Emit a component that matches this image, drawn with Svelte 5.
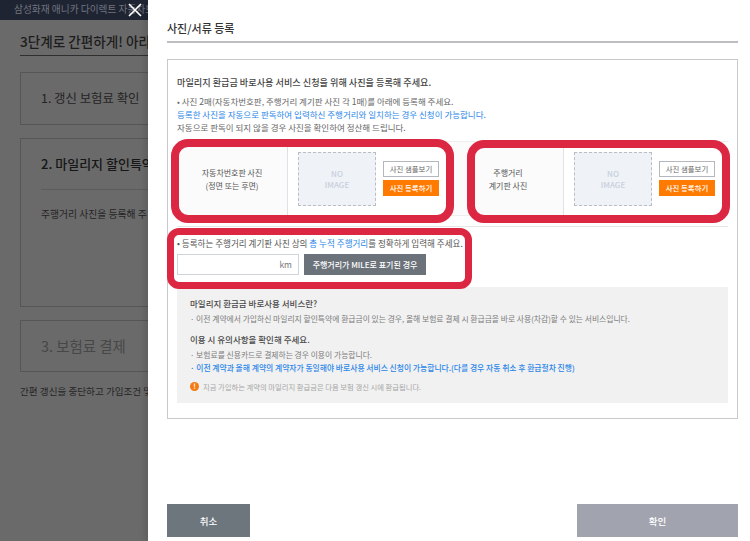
<script>
  const steps = [
    { title: "1. 갱신 보험료 확인", cls: "one" },
    { title: "2. 마일리지 할인특약", cls: "two" },
    { title: "3. 보험료 결제", cls: "three" }
  ];
  const photos = [
    { lines: ["자동차번호판 사진", "(정면 또는 후면)"], cls: "car" },
    { lines: ["주행거리", "계기판 사진"], cls: "meter" }
  ];
</script>

<div class="page">
  <div class="behind">
    <div class="topbar">삼성화재 애니카 다이렉트 자동차보</div>
    <div class="behind-body">
      <h2>3단계로 간편하게! 아라</h2>
      {#each steps as step}
        <section class="step {step.cls}">
          <h3>{step.title}</h3>
          {#if step.cls === "two"}
            <div class="step-line"></div>
            <p>주행거리 사진을 등록해 주</p>
          {/if}
        </section>
      {/each}
      <p class="behind-foot">간편 갱신을 중단하고 가입조건 및</p>
    </div>
  </div>

  <svg class="close" width="16" height="16" viewBox="0 0 16 16">
    <path d="M2 2 L14 14 M14 2 L2 14" stroke="#fff" stroke-width="1.6" fill="none" />
  </svg>

  <aside class="drawer">
    <h1>사진/서류 등록</h1>

    <div class="panel">
      <h4>마일리지 환급금 바로사용 서비스 신청을 위해 사진을 등록해 주세요.</h4>
      <div class="notes">
        <div>• 사진 2매(자동차번호판, 주행거리 계기판 사진 각 1매)를 아래에 등록해 주세요.</div>
        <div class="blue">등록한 사진을 자동으로 판독하여 입력하신 주행거리와 일치하는 경우 신청이 가능합니다.</div>
        <div>자동으로 판독이 되지 않을 경우 사진을 확인하여 정산해 드립니다.</div>
      </div>

      <div class="photos">
        {#each photos as photo}
          <div class="photo {photo.cls}">
            <div class="photo-label">
              {#each photo.lines as line}<span>{line}</span>{/each}
            </div>
            <div class="photo-main">
              <div class="noimage">NO<br />IMAGE</div>
              <div class="photo-btns">
                <button class="sample">사진 샘플보기</button>
                <button class="upload">사진 등록하기</button>
              </div>
            </div>
          </div>
        {/each}
      </div>

      <div class="mile">
        <div class="mile-note">• 등록하는 주행거리 계기판 사진 상의 <span class="blue">총 누적 주행거리</span>를 정확하게 입력해 주세요.</div>
        <div class="mile-row">
          <div class="km">km</div>
          <button class="mile-btn">주행거리가 MILE로 표기된 경우</button>
        </div>
      </div>

      <div class="info">
        <h5>마일리지 환급금 바로사용 서비스란?</h5>
        <p>· 이전 계약에서 가입하신 마일리지 할인특약에 환급금이 있는 경우, 올해 보험료 결제 시 환급금을 바로 사용(차감)할 수 있는 서비스입니다.</p>
        <h5 class="second">이용 시 유의사항을 확인해 주세요.</h5>
        <p>· 보험료를 신용카드로 결제하는 경우 이용이 가능합니다.</p>
        <p class="blue strong">· 이전 계약과 올해 계약의 계약자가 동일해야 바로사용 서비스 신청이 가능합니다.(다를 경우 자동 취소 후 환급절차 진행)</p>
        <div class="warn">
          <span class="warn-icon">!</span>
          <span>지금 가입하는 계약의 마일리지 환급금은 다음 보험 갱신 시에 환급됩니다.</span>
        </div>
      </div>
    </div>

    <div class="actions">
      <button class="cancel">취소</button>
      <button class="confirm">확인</button>
    </div>
  </aside>

  <!-- red callouts drawn over the screen -->
  <div class="mark m1"></div>
  <div class="mark m2"></div>
  <div class="mark m3"></div>
</div>

<style>
  :global(body) {
    margin: 0;
    background: #6a6a6a;
  }

  .page {
    position: relative;
    width: 750px;
    height: 541px;
    overflow: hidden;
    display: flex;
    font-family: "Noto Sans CJK KR", "Noto Sans", sans-serif;
    background: #6a6a6a;
  }

  button {
    font-family: inherit;
    border: none;
    padding: 0;
    cursor: pointer;
  }

  .behind {
    width: 148px;
    flex: none;
    overflow: hidden;
    white-space: nowrap;
  }

  .topbar {
    height: 20px;
    background: #1f2433;
    color: #70747e;
    font-size: 9.7px;
    line-height: 19px;
    padding-left: 14px;
  }

  .behind-body {
    padding-left: 20px;
    width: 128px;
  }

  h2 {
    margin: 0;
    height: 35px;
    width: 400px;
    border-bottom: 1px solid #2f2f2f;
    font-size: 13.6px;
    font-weight: 500;
    line-height: 43px;
    color: #1d1d1d;
  }

  .step {
    width: 400px;
    box-sizing: border-box;
    border: 1px solid #565656;
    padding-left: 20px;
    margin-top: 16px;
  }

  .step h3 {
    margin: 0;
    font-size: 13px;
    font-weight: 400;
    color: #242424;
  }

  .step.one {
    height: 53px;
  }

  .step.one h3 {
    font-size: 12.4px;
    line-height: 50px;
  }

  .step.two {
    height: 169px;
    margin-top: 13px;
  }

  .step.two h3 {
    line-height: 50px;
    font-weight: 500;
    color: #161616;
  }

  .step-line {
    height: 1px;
    background: #5c5c5c;
  }

  .step.two p {
    margin: 16px 0 0;
    font-size: 9.8px;
    line-height: 16px;
    color: #242424;
  }

  .step.three {
    height: 52px;
    margin-top: 13px;
  }

  .step.three h3 {
    font-size: 14.4px;
    line-height: 50px;
    color: #474747;
  }

  .behind-foot {
    margin: 11px 0 0;
    font-size: 9.6px;
    line-height: 16px;
    color: #262626;
  }

  .close {
    position: absolute;
    left: 127px;
    top: 2px;
  }

  .drawer {
    flex: 1;
    background: #fff;
    padding: 0 12px 0 19px;
    display: flex;
    flex-direction: column;
    box-shadow: -3px 0 6px rgba(0, 0, 0, 0.12);
  }

  h1 {
    margin: 0;
    height: 41px;
    border-bottom: 2px solid #bdbdc2;
    font-size: 11px;
    font-weight: 500;
    line-height: 56px;
    color: #333;
  }

  .panel {
    margin-top: 16px;
    height: 360px;
    box-sizing: border-box;
    border: 1px solid #c9c9cc;
    padding: 0 9px;
    color: #555;
  }

  h4 {
    margin: 14px 0 0;
    font-size: 9.15px;
    font-weight: 500;
    line-height: 16px;
    color: #444;
  }

  .notes {
    margin-top: 5px;
    font-size: 8.5px;
    line-height: 13px;
    color: #666;
    white-space: nowrap;
  }

  .blue {
    color: #2a86e8;
  }

  .photos {
    margin-top: 7px;
    display: flex;
    height: 85px;
    border-bottom: 1px solid #e6e6e6;
  }

  .photo {
    display: flex;
    height: 75px;
    border-top: 1px solid #eee;
    border-bottom: 1px solid #eee;
    box-sizing: border-box;
  }

  .photo.car {
    width: 276px;
  }

  .photo.meter {
    width: 275px;
  }

  .photo-label {
    width: 111px;
    display: flex;
    flex-direction: column;
    align-items: center;
    justify-content: center;
    box-sizing: border-box;
    border-right: 1px solid #dfe1e6;
    background: #fbfbfb;
    font-size: 8px;
    line-height: 13px;
    color: #555;
  }

  .photo-main {
    display: flex;
    align-items: center;
    padding-left: 10px;
    gap: 7px;
  }

  .noimage {
    width: 78px;
    height: 54px;
    box-sizing: border-box;
    border: 1px dashed #b9bdc4;
    background: #eff2f7;
    color: #c8d0dc;
    font-size: 8px;
    font-weight: 500;
    line-height: 11px;
    text-align: center;
    display: flex;
    flex-direction: column;
    justify-content: center;
  }

  .photo-btns {
    display: flex;
    flex-direction: column;
    gap: 3px;
    width: 56px;
  }

  .photo-btns button {
    height: 16px;
    font-size: 7.4px;
    line-height: 14px;
    white-space: nowrap;
  }

  .sample {
    background: #fff;
    border: 1px solid #b4b7bd;
    color: #666;
  }

  .upload {
    background: #ff7a00;
    color: #fff;
    font-weight: 500;
  }

  .mile {
    padding-top: 9px;
  }

  .mile-note {
    font-size: 8.55px;
    line-height: 14px;
    color: #555;
  }

  .mile-row {
    margin-top: 4px;
    display: flex;
    gap: 5px;
  }

  .km {
    width: 122px;
    height: 21px;
    box-sizing: border-box;
    border: 1px solid #cfd3da;
    font-size: 8.5px;
    line-height: 19px;
    text-align: right;
    padding-right: 6px;
    color: #777;
  }

  .mile-btn {
    width: 122px;
    height: 21px;
    background: #6b727a;
    color: #fff;
    font-size: 8px;
    font-weight: 500;
    white-space: nowrap;
  }

  .info {
    margin-top: 12px;
    height: 116px;
    box-sizing: border-box;
    background: #f1f1f1;
    padding: 9px 13px 0;
    white-space: nowrap;
  }

  h5 {
    margin: 0;
    font-size: 8.5px;
    font-weight: 500;
    line-height: 15px;
    color: #4a4a4a;
  }

  h5.second {
    margin-top: 6px;
  }

  .info p {
    margin: 0;
    font-size: 7.8px;
    line-height: 13.5px;
    color: #7c7c7c;
  }

  .info p.blue {
    color: #2a86e8;
  }

  .info h5 + p {
    margin-top: 1px;
  }

  .strong {
    font-weight: 500;
  }

  .warn {
    display: flex;
    align-items: center;
    gap: 4px;
    margin-top: 6px;
    font-size: 7.3px;
    line-height: 12px;
    color: #a6a6a6;
  }

  .warn-icon {
    width: 9px;
    height: 9px;
    border-radius: 50%;
    background: #f47a12;
    color: #fff;
    font-size: 7px;
    font-weight: 700;
    line-height: 9px;
    text-align: center;
  }

  .actions {
    margin-top: 85px;
    display: flex;
    justify-content: space-between;
  }

  .actions button {
    height: 33px;
    color: #fff;
    font-size: 9.5px;
    font-weight: 500;
  }

  .cancel {
    width: 83px;
    background: #6d757d;
  }

  .confirm {
    width: 161px;
    background: #a1a4ae;
  }

  .mark {
    position: absolute;
    box-sizing: border-box;
    border: 8px solid #dc2743;
    border-radius: 17px;
  }

  .m1 {
    left: 171px;
    top: 139px;
    width: 283px;
    height: 84px;
  }

  .m2 {
    left: 467px;
    top: 140px;
    width: 263px;
    height: 83px;
  }

  .m3 {
    left: 167px;
    top: 228px;
    width: 305px;
    height: 61px;
    border-width: 7px;
    border-radius: 12px;
  }
</style>
